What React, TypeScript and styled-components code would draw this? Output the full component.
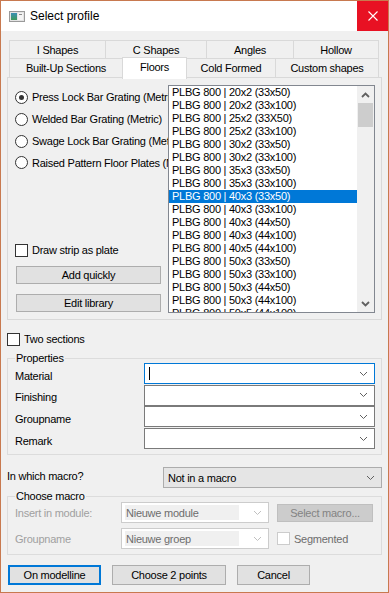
import React from "react";
import styled, { createGlobalStyle } from "styled-components";

const Global = createGlobalStyle`
  html, body { margin: 0; padding: 0; background: #fff; }
  * { box-sizing: border-box; }
`;

const Window = styled.div`
  width: 389px;
  height: 593px;
  border: 1px solid #c8794f;
  background: #f0f0f0;
  display: flex;
  flex-direction: column;
  overflow: hidden;
  font-family: "Liberation Sans", Arial, sans-serif;
  font-size: 11px;
  letter-spacing: -0.25px;
  color: #000;
`;

const TitleBar = styled.div`
  height: 30px;
  flex: none;
  background: #fff;
  display: flex;
  align-items: center;
`;

const TitleIcon = styled.svg`
  margin-left: 8px;
  width: 16px;
  height: 11px;
  flex: none;
`;

const TitleText = styled.div`
  margin-left: 5px;
  flex: 1;
  font-size: 12px;
  letter-spacing: 0;
  color: #000;
`;

const CloseButton = styled.div`
  width: 31px;
  height: 30px;
  background: #e81123;
  display: flex;
  align-items: center;
  justify-content: center;
`;

const Body = styled.div`
  flex: 1;
  display: flex;
  flex-direction: column;
  padding: 0 6px;
`;

const TabStrip = styled.div`
  margin-top: 9px;
  margin-left: 2px;
  display: flex;
  flex-direction: column;
`;

const TabRow = styled.div<{ $h: number }>`
  display: flex;
  height: ${(p) => p.$h}px;
  & + & {
    margin-top: -1px;
  }
`;

const Tab = styled.div<{ $w: number; $sel?: boolean }>`
  position: relative;
  z-index: ${(p) => (p.$sel ? 2 : 1)};
  width: ${(p) => p.$w}px;
  height: ${(p) => (p.$sel ? "calc(100% + 2px)" : "100%")};
  margin-top: ${(p) => (p.$sel ? "-1px" : "0")};
  padding-bottom: ${(p) => (p.$sel ? "3px" : "0")};
  flex: none;
  border: 1px solid #d9d9d9;
  border-bottom: ${(p) => (p.$sel ? "none" : "1px solid #d9d9d9")};
  background: ${(p) => (p.$sel ? "#fff" : "#f0f0f0")};
  display: flex;
  align-items: center;
  justify-content: center;
  white-space: nowrap;
  & + & {
    margin-left: -1px;
  }
`;

const TabPanel = styled.div`
  margin-top: -1px;
  height: 243px;
  width: 375px;
  border: 1px solid #d9d9d9;
  background: #f0f0f0;
  display: flex;
  flex: none;
`;

const LeftColumn = styled.div`
  width: 160px;
  flex: none;
  overflow: hidden;
  padding: 8px 0 0 7px;
  display: flex;
  flex-direction: column;
`;

const OptionRow = styled.div<{ $h?: number }>`
  height: ${(p) => p.$h ?? 22}px;
  display: flex;
  align-items: center;
  white-space: nowrap;
  gap: 4px;
`;

const RadioDot = styled.span<{ $on?: boolean }>`
  width: 13px;
  height: 13px;
  flex: none;
  border-radius: 50%;
  border: 1px solid #333;
  background: #fff;
  display: flex;
  align-items: center;
  justify-content: center;
  &::after {
    content: "";
    width: 5px;
    height: 5px;
    border-radius: 50%;
    background: #333;
    display: ${(p) => (p.$on ? "block" : "none")};
  }
`;

const CheckBox = styled.span<{ $disabled?: boolean }>`
  width: 13px;
  height: 13px;
  flex: none;
  border: 1px solid ${(p) => (p.$disabled ? "#cccccc" : "#333")};
  background: #fff;
`;

const CheckRow = styled.div<{ $mt: number; $ml?: number }>`
  margin-top: ${(p) => p.$mt}px;
  margin-left: ${(p) => p.$ml ?? 0}px;
  height: 14px;
  display: flex;
  align-items: center;
  gap: 4px;
  white-space: nowrap;
`;

const Button = styled.div<{
  $w: number;
  $h?: number;
  $mt?: number;
  $ml?: number;
  $default?: boolean;
  $disabled?: boolean;
}>`
  width: ${(p) => p.$w}px;
  height: ${(p) => p.$h ?? 18}px;
  margin-top: ${(p) => p.$mt ?? 0}px;
  margin-left: ${(p) => p.$ml ?? 0}px;
  flex: none;
  border: ${(p) =>
    p.$default ? "2px solid #0078d7" : p.$disabled ? "1px solid #bfbfbf" : "1px solid #adadad"};
  background: ${(p) => (p.$disabled ? "#cccccc" : "#e1e1e1")};
  color: ${(p) => (p.$disabled ? "#838383" : "#000")};
  display: flex;
  align-items: center;
  justify-content: center;
  white-space: nowrap;
`;

const ListBox = styled.div`
  margin-top: 7px;
  width: 207px;
  height: 228px;
  flex: none;
  border: 1px solid #828790;
  background: #fff;
  display: flex;
  overflow: hidden;
`;

const ListItems = styled.div`
  flex: 1;
  overflow: hidden;
`;

const ListItem = styled.div<{ $sel?: boolean }>`
  height: 13px;
  line-height: 13px;
  padding-left: 3px;
  white-space: nowrap;
  background: ${(p) => (p.$sel ? "#0078d7" : "transparent")};
  color: ${(p) => (p.$sel ? "#fff" : "#000")};
`;

const ScrollBar = styled.div`
  width: 17px;
  flex: none;
  background: #f0f0f0;
  display: flex;
  flex-direction: column;
`;

const ScrollArrow = styled.div`
  height: 17px;
  display: flex;
  align-items: center;
  justify-content: center;
`;

const ScrollTrack = styled.div`
  flex: 1;
  padding: 0 1px;
`;

const ScrollThumb = styled.div`
  height: 24px;
  background: #cdcdcd;
`;

const GroupBox = styled.fieldset<{ $mt: number; $gap: number; $pt?: number }>`
  margin: ${(p) => p.$mt}px 0 0 0;
  padding: ${(p) => p.$pt ?? 0}px 6px 5px 7px;
  width: 375px;
  min-width: 0;
  border: 1px solid #dcdcdc;
  display: flex;
  flex-direction: column;
  gap: ${(p) => p.$gap}px;
`;

const Legend = styled.legend`
  padding: 0 1px;
  margin-bottom: -2px;
  line-height: 13px;
  font-size: 11px;
`;

const FieldRow = styled.div`
  height: 21px;
  display: flex;
  align-items: center;
`;

const FieldLabel = styled.div<{ $w: number; $disabled?: boolean; $dy?: number }>`
  width: ${(p) => p.$w}px;
  flex: none;
  padding-top: ${(p) => p.$dy ?? 0}px;
  color: ${(p) => (p.$disabled ? "#a0a0a0" : "#000")};
  white-space: nowrap;
`;

const Combo = styled.div<{ $w: number; $focus?: boolean; $variant?: "edit" | "list" | "disabled" }>`
  width: ${(p) => p.$w}px;
  height: 21px;
  flex: none;
  border: 1px solid
    ${(p) =>
      p.$focus
        ? "#0078d7"
        : p.$variant === "list"
        ? "#acacac"
        : p.$variant === "disabled"
        ? "#cccccc"
        : "#7a7a7a"};
  background: ${(p) => (p.$variant === "list" ? "#e5e5e5" : "#fff")};
  display: flex;
  align-items: center;
  padding: 0 6px 0 3px;
`;

const ComboText = styled.div<{ $disabled?: boolean }>`
  flex: 1;
  align-self: stretch;
  margin: 2px 0;
  display: flex;
  align-items: center;
  padding-left: 1px;
  background: ${(p) => (p.$disabled ? "#f0f0f0" : "transparent")};
  color: ${(p) => (p.$disabled ? "#6d6d6d" : "#000")};
  margin-right: ${(p) => (p.$disabled ? "14px" : "0")};
  white-space: nowrap;
`;

const Caret = styled.span`
  width: 1px;
  height: 13px;
  background: #000;
`;

const MacroRow = styled.div`
  margin-top: 12px;
  height: 21px;
  display: flex;
  align-items: center;
  justify-content: space-between;
`;

const MacroLabel = styled.div`
  padding-bottom: 3px;
`;

const GroupRow = styled.div`
  height: 21px;
  display: flex;
  align-items: center;
`;

const Disabled = styled.span`
  color: #6d6d6d;
`;

const ButtonBar = styled.div`
  margin-top: 10px;
  margin-left: 1px;
  display: flex;
  gap: 11px;
`;

const Chevron = ({ color = "#606060", up = false, bold = false }: { color?: string; up?: boolean; bold?: boolean }) => (
  <svg width="9" height="6" viewBox="0 0 9 6">
    <polyline
      points={up ? "1,5 4.5,1.5 8,5" : "1,1 4.5,4.5 8,1"}
      fill="none"
      stroke={color}
      strokeWidth={bold ? 1.8 : 1}
    />
  </svg>
);

const items = [
  "PLBG 800 | 20x2 (33x50)",
  "PLBG 800 | 20x2 (33x100)",
  "PLBG 800 | 25x2 (33X50)",
  "PLBG 800 | 25x2 (33x100)",
  "PLBG 800 | 30x2 (33x50)",
  "PLBG 800 | 30x2 (33x100)",
  "PLBG 800 | 35x3 (33x50)",
  "PLBG 800 | 35x3 (33x100)",
  "PLBG 800 | 40x3 (33x50)",
  "PLBG 800 | 40x3 (33x100)",
  "PLBG 800 | 40x3 (44x50)",
  "PLBG 800 | 40x3 (44x100)",
  "PLBG 800 | 40x5 (44x100)",
  "PLBG 800 | 50x3 (33x50)",
  "PLBG 800 | 50x3 (33x100)",
  "PLBG 800 | 50x3 (44x50)",
  "PLBG 800 | 50x3 (44x100)",
  "PLBG 800 | 50x5 (44x100)",
];

const row1 = [
  { label: "I Shapes", w: 97 },
  { label: "C Shapes", w: 102 },
  { label: "Angles", w: 88 },
  { label: "Hollow", w: 86 },
];
const row2 = [
  { label: "Built-Up Sections", w: 114 },
  { label: "Floors", w: 65, sel: true },
  { label: "Cold Formed", w: 90 },
  { label: "Custom shapes", w: 104 },
];

const radios = [
  { label: "Press Lock Bar Grating (Metric)", on: true },
  { label: "Welded Bar Grating (Metric)" },
  { label: "Swage Lock Bar Grating (Metric)" },
  { label: "Raised Pattern Floor Plates (Metric)", h: 21 },
];

const props = ["Material", "Finishing", "Groupname", "Remark"];

export default function App() {
  return (
    <>
      <Global />
      <Window>
        <TitleBar>
          <TitleIcon viewBox="0 0 16 11">
            <defs>
              <linearGradient id="ig" x1="0" y1="0" x2="0" y2="1">
                <stop offset="0" stopColor="#3a8fb5" />
                <stop offset="1" stopColor="#3d9a5a" />
              </linearGradient>
            </defs>
            <rect x="0.5" y="0.5" width="15" height="10" fill="#e4e4e4" stroke="#9a9a9a" />
            <rect x="2" y="2" width="6" height="7" fill="url(#ig)" />
            <rect x="9" y="2" width="5" height="7" fill="#f4f4f4" />
            <rect x="10" y="3" width="3" height="1" fill="#8a8a8a" />
          </TitleIcon>
          <TitleText>Select profile</TitleText>
          <CloseButton>
            <svg width="10" height="10" viewBox="0 0 10 10">
              <path d="M0.5 0.5 L9.5 9.5 M9.5 0.5 L0.5 9.5" stroke="#fff" strokeWidth="1.1" />
            </svg>
          </CloseButton>
        </TitleBar>
        <Body>
          <TabStrip>
            <TabRow $h={19}>
              {row1.map((t) => (
                <Tab key={t.label} $w={t.w}>
                  {t.label}
                </Tab>
              ))}
            </TabRow>
            <TabRow $h={20}>
              {row2.map((t) => (
                <Tab key={t.label} $w={t.w} $sel={t.sel}>
                  {t.label}
                </Tab>
              ))}
            </TabRow>
          </TabStrip>
          <TabPanel>
            <LeftColumn>
              {radios.map((r) => (
                <OptionRow key={r.label} $h={r.h}>
                  <RadioDot $on={r.on} />
                  {r.label}
                </OptionRow>
              ))}
              <CheckRow $mt={70}>
                <CheckBox />
                Draw strip as plate
              </CheckRow>
              <Button $w={145} $mt={9} $ml={1}>
                Add quickly
              </Button>
              <Button $w={145} $mt={10} $ml={1}>
                Edit library
              </Button>
            </LeftColumn>
            <ListBox>
              <ListItems>
                {items.map((it, i) => (
                  <ListItem key={it} $sel={i === 8}>
                    {it}
                  </ListItem>
                ))}
              </ListItems>
              <ScrollBar>
                <ScrollArrow>
                  <Chevron up bold />
                </ScrollArrow>
                <ScrollTrack>
                  <ScrollThumb />
                </ScrollTrack>
                <ScrollArrow>
                  <Chevron bold />
                </ScrollArrow>
              </ScrollBar>
            </ListBox>
          </TabPanel>
          <CheckRow $mt={12}>
            <CheckBox />
            Two sections
          </CheckRow>
          <GroupBox $mt={6} $gap={0.7}>
            <Legend>Properties</Legend>
            {props.map((p, i) => (
              <FieldRow key={p}>
                <FieldLabel $w={129} $dy={4}>
                  {p}
                </FieldLabel>
                <Combo $w={231} $focus={i === 0}>
                  <ComboText>{i === 0 && <Caret />}</ComboText>
                  <Chevron />
                </Combo>
              </FieldRow>
            ))}
          </GroupBox>
          <MacroRow>
            <MacroLabel>In which macro?</MacroLabel>
            <Combo $w={219} $variant="list">
              <ComboText>Not in a macro</ComboText>
              <Chevron />
            </Combo>
          </MacroRow>
          <GroupBox $mt={2} $gap={5} $pt={1}>
            <Legend>Choose macro</Legend>
            <GroupRow>
              <FieldLabel $w={106} $disabled>
                Insert in module:
              </FieldLabel>
              <Combo $w={148} $variant="disabled">
                <ComboText $disabled>Nieuwe module</ComboText>
                <Chevron color="#c0c0c0" />
              </Combo>
              <Button $w={96} $h={18} $ml={8} $disabled>
                Select macro...
              </Button>
            </GroupRow>
            <GroupRow>
              <FieldLabel $w={106} $disabled>
                Groupname
              </FieldLabel>
              <Combo $w={148} $variant="disabled">
                <ComboText $disabled>Nieuwe groep</ComboText>
                <Chevron color="#c0c0c0" />
              </Combo>
              <CheckRow $mt={0} $ml={8}>
                <CheckBox $disabled />
                <Disabled>Segmented</Disabled>
              </CheckRow>
            </GroupRow>
          </GroupBox>
          <ButtonBar>
            <Button $w={93} $h={20} $default>
              On modelline
            </Button>
            <Button $w={114} $h={20}>
              Choose 2 points
            </Button>
            <Button $w={73} $h={20}>
              Cancel
            </Button>
          </ButtonBar>
        </Body>
      </Window>
    </>
  );
}
